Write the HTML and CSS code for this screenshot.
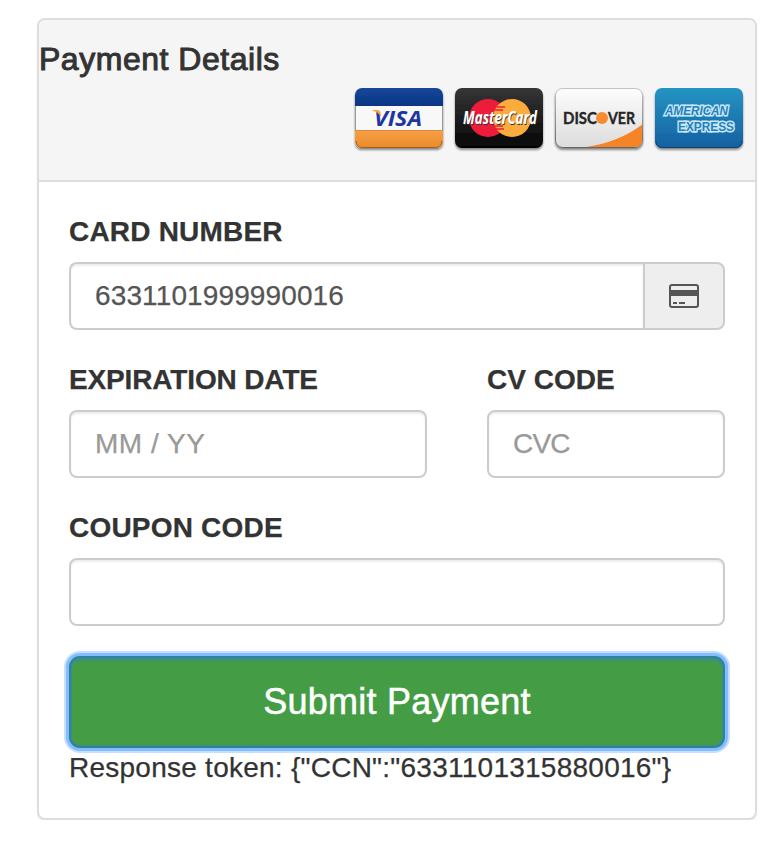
FILE: index.html
```html
<!DOCTYPE html>
<html lang="en">
<head>
<meta charset="utf-8">
<title>Payment Details</title>
<link rel="stylesheet" href="styles.css">
</head>
<body>
<main class="panel">
  <header class="panel-heading">
    <h3 class="title">Payment Details</h3>
    <svg class="cards" width="400" height="72" viewBox="0 0 400 72" role="img" aria-label="Accepted cards">
      <defs>
        <linearGradient id="blue" x2="0" y2="1"><stop stop-color="#164799"/><stop offset="1" stop-color="#0b3585"/></linearGradient>
        <linearGradient id="orange" x2="0" y2="1"><stop stop-color="#f9a044"/><stop offset="1" stop-color="#e88a2d"/></linearGradient>
        <linearGradient id="black" x2="0" y2="1"><stop stop-color="#363636"/><stop offset="1" stop-color="#050505"/></linearGradient>
        <linearGradient id="silver" x2="0" y2="1"><stop stop-color="#fdfdfd"/><stop offset="1" stop-color="#dcdcdc"/></linearGradient>
        <linearGradient id="amex" x2="0" y2="1"><stop stop-color="#2494c4"/><stop offset="1" stop-color="#1660a2"/></linearGradient>
        <linearGradient id="edge" x2="0" y2="1"><stop stop-color="#c2c2c2"/><stop offset="1" stop-color="#666"/></linearGradient>
        <clipPath id="visa-clip"><rect x="5" y="4" width="88" height="60" rx="7"/></clipPath>
        <clipPath id="disc-clip"><rect x="206" y="5" width="86" height="58" rx="6"/></clipPath>
        <filter id="shadow" x="-10%" y="-10%" width="120%" height="130%"><feDropShadow dx="0" dy="2" stdDeviation="1.2" flood-opacity=".45"/></filter>
      </defs>
      <g filter="url(#shadow)">
        <g clip-path="url(#visa-clip)">
          <rect x="5" y="4" width="88" height="60" fill="#f8f8f8"/>
          <rect x="5" y="4" width="88" height="18" fill="url(#blue)"/>
          <rect x="5" y="46" width="88" height="18" fill="url(#orange)"/>
          <path d="M5.500 22v24M92.500 22v24" stroke="#999"/>
          <path d="M5 46.500h88" stroke="#d48b42"/>
        </g>
        <path d="M6 57q0 6.500 6.500 6.500h73q6.500 0 6.500-6.500" fill="none" stroke="#a45d18"/>
      </g>
      <text class="visa" x="24" y="42" textLength="48" lengthAdjust="spacingAndGlyphs">VISA</text>
      <path d="M22.500 26h5q2.500 0 3 2.500l.5 4Q28 28 22.500 26.500z" fill="#f5a536"/>
      <g filter="url(#shadow)"><rect x="105" y="4" width="88" height="60" rx="7" fill="url(#black)"/></g>
      <circle cx="138" cy="34" r="19" fill="#ed1c3b"/>
      <circle cx="162" cy="34" r="19" fill="#fbac3c"/>
      <path d="M147 23h8M145 26h8M144 42h9M146 45h8" stroke="#ed1c3b" stroke-width="1.500"/>
      <text class="master-shade" x="113.500" y="40.500" textLength="74" lengthAdjust="spacingAndGlyphs">MasterCard</text>
      <text class="master" x="113" y="40" textLength="74" lengthAdjust="spacingAndGlyphs">MasterCard</text>
      <g filter="url(#shadow)">
        <rect x="205.500" y="4.500" width="87" height="59" rx="7" fill="url(#silver)" stroke="url(#edge)"/>
        <path clip-path="url(#disc-clip)" d="M233 63.500Q268 59 293 40v24h-60z" fill="#f58426"/>
      </g>
      <text class="discover" x="213" y="40" textLength="34" lengthAdjust="spacingAndGlyphs">DISC</text>
      <text class="discover" x="258" y="40" textLength="27" lengthAdjust="spacingAndGlyphs">VER</text>
      <circle cx="252" cy="34" r="6" fill="#f68b32"/>
      <g filter="url(#shadow)"><rect x="305" y="4" width="88" height="60" rx="7" fill="url(#amex)"/></g>
      <path d="M306 57q0 6.500 6.500 6.500h73q6.500 0 6.500-6.500" fill="none" stroke="#0d416d"/>
      <text class="amex slanted" x="315" y="31" textLength="63" lengthAdjust="spacingAndGlyphs">AMERICAN</text>
      <text class="amex" x="328" y="47" textLength="56" lengthAdjust="spacingAndGlyphs">EXPRESS</text>
    </svg>
  </header>
  <form class="panel-body">
    <div class="group">
      <label for="number" class="wide">CARD NUMBER</label>
      <div class="input-group">
        <input id="number" class="control number" type="text" value="6331101999990016">
        <span class="addon">
          <svg width="30" height="24" viewBox="0 0 30 24" aria-hidden="true">
            <rect x="1" y="1" width="28" height="22" rx="2" fill="none" stroke="#555" stroke-width="2"/>
            <path d="M1 6h28v6H1zM4 18h4v2H4zM10 18h6v2h-6z" fill="#555"/>
          </svg>
        </span>
      </div>
    </div>
    <div class="row">
      <div class="group">
        <label for="expiry" class="narrow">EXPIRATION DATE</label>
        <input id="expiry" class="control expiry" type="text" placeholder="MM / YY">
      </div>
      <div class="group">
        <label for="cvc">CV CODE</label>
        <input id="cvc" class="control cvc" type="text" placeholder="CVC">
      </div>
    </div>
    <div class="group">
      <label for="coupon" class="wide">COUPON CODE</label>
      <input id="coupon" class="control" type="text">
    </div>
    <button class="submit" type="button">Submit Payment</button>
    <p class="response">Response token: {"CCN":"6331101315880016"}</p>
  </form>
</main>
</body>
</html>
```
FILE: styles.css
```css
* { box-sizing: border-box; }

body {
  margin: 0;
  padding: 18px 26px 0 37px;
  background: #fff;
  color: #333;
  font: 28px/40px "Liberation Sans", Arial, sans-serif;
  -webkit-text-stroke-width: .25px;
}

.panel {
  height: 802px;
  border: 2px solid #ddd;
  border-radius: 8px;
  background: #fff;
  box-shadow: 0 2px 2px rgba(0, 0, 0, .05);
}

.panel-heading {
  display: flex;
  flex-direction: column;
  height: 162px;
  padding-top: 19px;
  border-bottom: 2px solid #ddd;
  border-radius: 6px 6px 0 0;
  background: #f5f5f5;
}

.title {
  margin: 0;
  font-size: 32px;
  font-weight: 400;
  line-height: 40px;
  letter-spacing: .52px;
  -webkit-text-stroke: 1px #333;
}

.cards {
  align-self: flex-end;
  margin: 5px 5px 0 0;
  -webkit-text-stroke-width: 0;
}

.visa { font: italic bold 22px "Open Sans", sans-serif; fill: #1e36a0; }
.master, .master-shade { font: italic bold 17px "Open Sans", sans-serif; fill: #fff; }
.master-shade { fill: #333; }
.discover { font: bold 17px Lato, sans-serif; fill: #262626; stroke: #262626; stroke-width: .4px; }
.amex {
  font: bold 13px "Liberation Sans", sans-serif;
  fill: #2380b8;
  stroke: #c9e8f8;
  stroke-width: 3px;
  paint-order: stroke;
}
.slanted { font-style: italic; }

.panel-body { padding: 30px; }

.group { margin-bottom: 30px; }

label {
  display: block;
  margin-bottom: 10px;
  font-weight: 700;
}

.wide { letter-spacing: .2px; }
.narrow { letter-spacing: -.14px; }

.control {
  display: block;
  width: 100%;
  height: 68px;
  padding: 0 24px;
  border: 2px solid #ccc;
  border-radius: 8px;
  background: #fff;
  box-shadow: inset 0 2px 2px rgba(0, 0, 0, .075);
  color: #555;
  font: inherit;
  outline: none;
}

.control::placeholder { color: #999; opacity: 1; }

.number { letter-spacing: .12px; }
.expiry { letter-spacing: .5px; }
.cvc { letter-spacing: -.8px; }

.input-group { display: flex; }

.input-group .control {
  flex: 1;
  min-width: 0;
  border-radius: 8px 0 0 8px;
  border-right: 0;
}

.addon {
  display: flex;
  align-items: center;
  justify-content: center;
  width: 82px;
  height: 68px;
  border: 2px solid #ccc;
  border-radius: 0 8px 8px 0;
  background: #eee;
}

.row {
  display: grid;
  grid-template-columns: 358px 238px;
  gap: 60px;
}

.submit {
  display: block;
  width: 100%;
  height: 92px;
  padding: 0;
  border: 2px solid #3080a0;
  border-radius: 11px;
  background: #449d44;
  box-shadow: 0 0 0 3px #83bcff, 0 0 0 5px #c5dfff, inset 0 0 0 1px #3c9080, inset 0 3px 2px #3c9080;
  color: #fff;
  font: 36px/48px "Liberation Sans", Arial, sans-serif;
  letter-spacing: .25px;
  -webkit-text-stroke: .5px #fff;
}

.response {
  margin: 0;
  letter-spacing: .25px;
  white-space: nowrap;
}
```
